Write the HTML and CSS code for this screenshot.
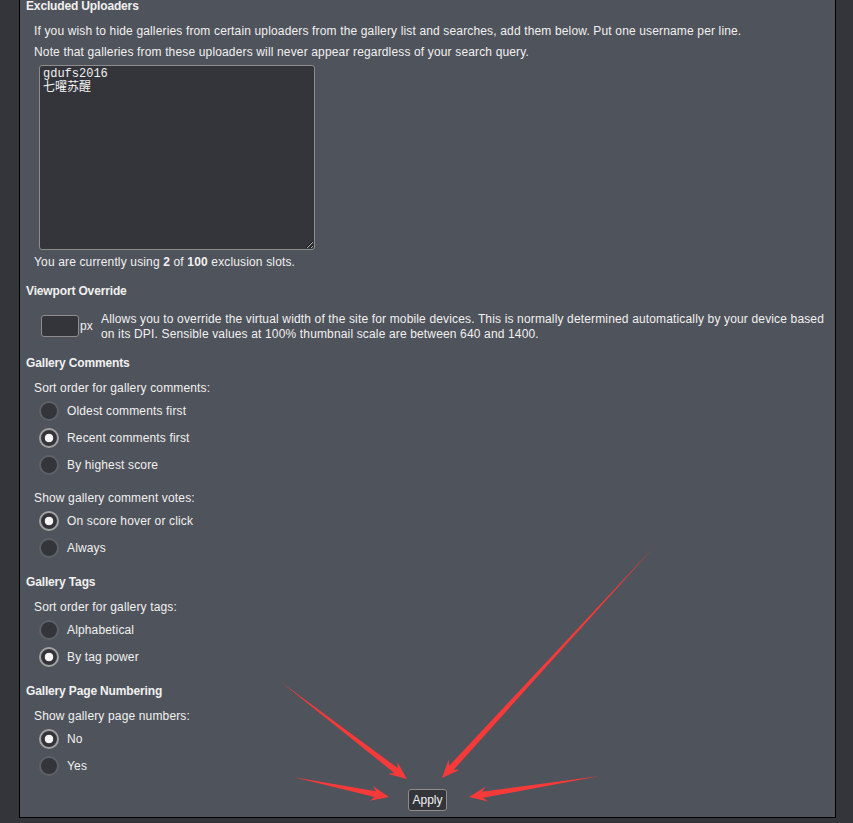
FILE: index.html
```html
<!DOCTYPE html>
<html lang="en">
<head>
    <meta charset="UTF-8">
    <meta name="viewport" content="width=device-width, initial-scale=1.0">
    <title>Settings</title>
    <link rel="stylesheet" href="styles.css">
</head>
<body>
    <div class="settings">
        <section class="section first">
            <h2>Excluded Uploaders</h2>
            <p class="note">If you wish to hide galleries from certain uploaders from the gallery list and searches, add them below. Put one username per line.</p>
            <p class="note">Note that galleries from these uploaders will never appear regardless of your search query.</p>
            <textarea class="uploader-list">gdufs2016
七曜苏醒</textarea>
            <p class="note slots">You are currently using <b>2</b> of <b>100</b> exclusion slots.</p>
        </section>

        <section class="section">
            <h2>Viewport Override</h2>
            <div class="viewport">
                <div class="viewport-input">
                    <input type="text" class="text-box">
                    <span>px</span>
                </div>
                <p class="viewport-desc">Allows you to override the virtual width of the site for mobile devices. This is normally determined automatically by your device based on its DPI. Sensible values at 100% thumbnail scale are between 640 and 1400.</p>
            </div>
        </section>

        <section class="section">
            <h2>Gallery Comments</h2>
            <p class="field-label">Sort order for gallery comments:</p>
            <div class="radios">
                <label class="radio"><input type="radio" name="cs"> Oldest comments first</label>
                <label class="radio"><input type="radio" name="cs" checked> Recent comments first</label>
                <label class="radio"><input type="radio" name="cs"> By highest score</label>
            </div>
            <p class="field-label">Show gallery comment votes:</p>
            <div class="radios">
                <label class="radio"><input type="radio" name="sc" checked> On score hover or click</label>
                <label class="radio"><input type="radio" name="sc"> Always</label>
            </div>
        </section>

        <section class="section">
            <h2>Gallery Tags</h2>
            <p class="field-label">Sort order for gallery tags:</p>
            <div class="radios">
                <label class="radio"><input type="radio" name="tb"> Alphabetical</label>
                <label class="radio"><input type="radio" name="tb" checked> By tag power</label>
            </div>
        </section>

        <section class="section">
            <h2>Gallery Page Numbering</h2>
            <p class="field-label">Show gallery page numbers:</p>
            <div class="radios">
                <label class="radio"><input type="radio" name="pn" checked> No</label>
                <label class="radio"><input type="radio" name="pn"> Yes</label>
            </div>
        </section>

        <div class="apply-row">
            <button class="apply-button">Apply</button>
        </div>
    </div>

    <!-- red annotation arrows pointing at the Apply button -->
    <svg class="arrows" width="853" height="823" viewBox="0 0 853 823">
        <polygon points="281,682 394.1,772.8 388.2,774 407,779 397.3,762.1 397.7,768.1"/>
        <polygon points="655,546 449.3,765.7 448.7,759.6 442,778 459.7,769.8 453.7,769.7"/>
        <polygon points="293,777 374.7,797.1 369.9,800.7 389,797 372.9,786 375.9,791.2"/>
        <polygon points="600,776 482.3,791.8 485.6,786.8 469,797 488,801.6 483.3,797.8"/>
    </svg>
</body>
</html>
```

FILE: styles.css
```css
body {
    margin: 0;
    padding: 0;
    background-color: #34353b;
    color: #f1f1f1;
    font-family: "Liberation Sans", Arial, sans-serif;
    font-size: 12px;
    letter-spacing: 0.15px;
    position: relative;
    height: 823px;
    overflow: hidden;
}
.settings {
    margin-left: 19px;
    width: 815px;
    background: #4f535b;
    border: 1px solid #000;
    border-top: none;
    padding-bottom: 6px;
}
.section {
    margin-top: 13px;
}
.section.first {
    margin-top: -2px;
}
h2 {
    font-size: 12px;
    font-weight: bold;
    line-height: 16px;
    letter-spacing: -0.15px;
    margin: 0;
    padding-left: 6px;
}
.note {
    margin: 9px 0 0;
    padding-left: 14px;
    line-height: 16px;
}
.note + .note {
    margin-top: 5px;
}
.note.slots {
    margin-top: 4px;
}
.uploader-list {
    display: block;
    box-sizing: border-box;
    width: 276px;
    height: 185px;
    margin: 5px 0 0 19px;
    padding: 1px 3px;
    background: #34353b;
    color: #f1f1f1;
    border: 1px solid #8d8d8d;
    border-radius: 3px;
    font-family: "Liberation Mono", "Noto Sans CJK SC", monospace;
    font-size: 12px;
    line-height: 14px;
    letter-spacing: 0;
}
.viewport {
    display: flex;
    align-items: flex-start;
    margin-top: 13px;
    padding: 0 6px 0 21px;
}
.viewport-input {
    display: flex;
    align-items: center;
    margin-top: 3px;
    gap: 1px;
}
.text-box {
    box-sizing: border-box;
    width: 38px;
    height: 22px;
    margin: 0;
    background: #34353b;
    border: 1px solid #8d8d8d;
    border-radius: 3px;
    color: #f1f1f1;
}
.viewport-desc {
    flex: 1;
    margin: 0 0 0 8px;
    line-height: 15px;
}
.field-label {
    margin: 9px 0 0;
    padding-left: 14px;
    line-height: 16px;
}
.radios {
    margin: 1px 0 12px;
}
.radio {
    display: flex;
    align-items: center;
    gap: 8px;
    height: 27px;
    padding-left: 19px;
}
.radio input {
    appearance: none;
    box-sizing: border-box;
    width: 20px;
    height: 20px;
    margin: 0;
    border-radius: 50%;
    border: 2px solid #5d6168;
    background: #34353b;
}
.radio input:checked {
    border-color: #a3a3a3;
    background: radial-gradient(circle, #f4f4f4 0 4px, #34353b 4.6px);
}
.apply-row {
    margin-top: -2px;
    text-align: center;
}
.apply-button {
    height: 22px;
    padding: 0 3px;
    background: #34353b;
    color: #f1f1f1;
    border: 1px solid #8d8d8d;
    border-radius: 3px;
    font-family: "Liberation Sans", Arial, sans-serif;
    font-size: 12px;
}
.arrows {
    position: absolute;
    top: 0;
    left: 0;
    pointer-events: none;
}
.arrows polygon {
    fill: #f63a3a;
}
```
